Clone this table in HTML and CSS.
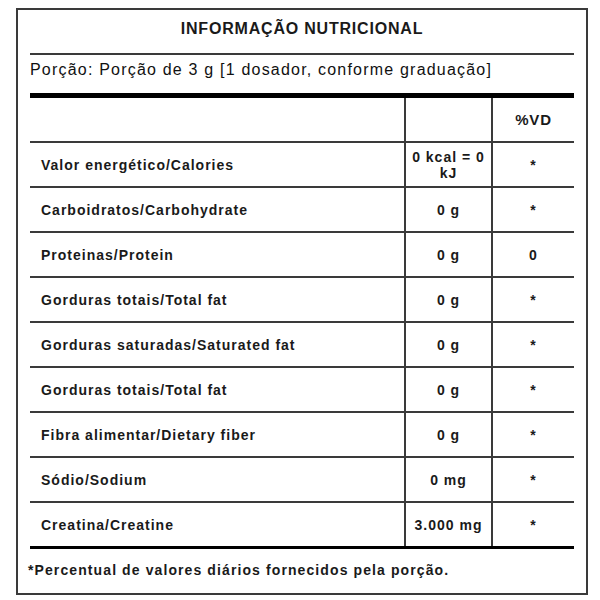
FILE: index.html
```html
<!DOCTYPE html>
<html lang="pt-BR">
<head>
<meta charset="utf-8">
<title>Informação Nutricional</title>
<link rel="stylesheet" href="styles.css">
</head>
<body>
<div class="label">
  <div class="title">INFORMAÇÃO NUTRICIONAL</div>
  <div class="serving">Porção: Porção de 3 g [1 dosador, conforme graduação]</div>
  <table class="facts">
    <colgroup>
      <col class="c-name">
      <col class="c-qty">
      <col class="c-vd">
    </colgroup>
    <thead>
      <tr><th class="name"></th><th class="qty"></th><th class="vd">%VD</th></tr>
    </thead>
    <tbody>
      <tr><td class="name">Valor energético/Calories</td><td class="qty">0 kcal = 0<br>kJ</td><td class="vd">*</td></tr>
      <tr><td class="name">Carboidratos/Carbohydrate</td><td class="qty">0 g</td><td class="vd">*</td></tr>
      <tr><td class="name">Proteinas/Protein</td><td class="qty">0 g</td><td class="vd">0</td></tr>
      <tr><td class="name">Gorduras totais/Total fat</td><td class="qty">0 g</td><td class="vd">*</td></tr>
      <tr><td class="name">Gorduras saturadas/Saturated fat</td><td class="qty">0 g</td><td class="vd">*</td></tr>
      <tr><td class="name">Gorduras totais/Total fat</td><td class="qty">0 g</td><td class="vd">*</td></tr>
      <tr><td class="name">Fibra alimentar/Dietary fiber</td><td class="qty">0 g</td><td class="vd">*</td></tr>
      <tr><td class="name">Sódio/Sodium</td><td class="qty">0 mg</td><td class="vd">*</td></tr>
      <tr><td class="name">Creatina/Creatine</td><td class="qty">3.000 mg</td><td class="vd">*</td></tr>
    </tbody>
  </table>
  <div class="footnote">*Percentual de valores diários fornecidos pela porção.</div>
</div>
</body>
</html>
```
FILE: styles.css
```css
html, body {
  margin: 0;
  padding: 0;
  background: #ffffff;
}

body {
  font-family: "Liberation Sans", Arial, sans-serif;
  color: #1a1a1a;
}

.label {
  box-sizing: border-box;
  width: 572px;
  height: 587px;
  margin: 8px 0 0 16px;
  border: 2px solid #3a3a3a;
  padding: 0 12px 0 12px;
  display: flex;
  flex-direction: column;
}

.title {
  box-sizing: border-box;
  height: 45px;
  border-bottom: 2px solid #3a3a3a;
  display: flex;
  align-items: center;
  justify-content: center;
  font-weight: bold;
  font-size: 16px;
  letter-spacing: 0.8px;
  padding-bottom: 5px;
}

.serving {
  box-sizing: border-box;
  height: 43px;
  border-bottom: 5px solid #000000;
  display: flex;
  align-items: center;
  font-size: 16px;
  letter-spacing: 1.2px;
  color: #111111;
  padding-bottom: 8px;
}

.facts {
  width: 100%;
  border-collapse: collapse;
  table-layout: fixed;
  border-bottom: 3px solid #000000;
}

.c-name { width: 375px; }
.c-qty { width: 87px; }
.c-vd { width: auto; }

.facts th,
.facts td {
  height: 43px;
  padding: 0;
  border-bottom: 2px solid #3a3a3a;
  font-weight: bold;
  font-size: 14px;
  letter-spacing: 1px;
  vertical-align: middle;
  text-align: center;
  line-height: 16px;
}

.facts tr:last-child td {
  border-bottom: 3px solid #000000;
}

.facts .name {
  text-align: left;
  padding-left: 11px;
}

.facts .qty,
.facts .vd {
  border-left: 2px solid #3a3a3a;
}

.facts th.vd {
  font-size: 15px;
  letter-spacing: 0.8px;
}

.footnote {
  flex: 1;
  display: flex;
  align-items: center;
  font-weight: bold;
  font-size: 14px;
  letter-spacing: 1.1px;
  margin-left: -2px;
  padding-bottom: 2px;
}
```
